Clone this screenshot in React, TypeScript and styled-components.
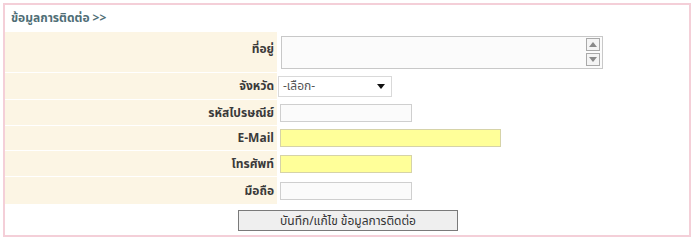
import styled, { createGlobalStyle } from 'styled-components';

const COLORS = {
  border: '#f4cfd8',
  labelBg: '#fcf5e4',
  label: '#3a3a3a',
  title: '#4f6e76',
  inputBorder: '#cfcfcf',
  inputBg: '#fbfbfb',
  required: '#ffff99',
  requiredBorder: '#d6d3a8',
};

const FONT = 'Tahoma, "Noto Sans Thai", "DejaVu Sans", "Noto Sans", sans-serif';

const GlobalStyle = createGlobalStyle`
  html, body {
    margin: 0;
    padding: 0;
    background: #ffffff;
  }
  body {
    font-family: ${FONT};
    font-size: 12px;
  }
`;

const Page = styled.div`
  width: 695px;
  height: 240px;
  padding: 3px 0 0 3px;
  box-sizing: border-box;
`;

/** 外框 */
const Panel = styled.div`
  width: 688px;
  height: 234px;
  box-sizing: border-box;
  border: 2px solid ${COLORS.border};
  display: flex;
  flex-direction: column;
`;

const Title = styled.div`
  height: 26px;
  padding-left: 6px;
  display: flex;
  align-items: center;
  color: ${COLORS.title};
  font-weight: bold;
  font-size: 12px;
`;

const Form = styled.div`
  display: grid;
  grid-template-columns: 272px 1fr;
  grid-template-rows: 40px 26px 25px 24px 25px 27px;
  row-gap: 1px;
  margin-top: 1px;
`;

const Label = styled.div<{ $top?: boolean }>`
  background: ${COLORS.labelBg};
  display: flex;
  justify-content: flex-end;
  align-items: ${(p) => (p.$top ? 'flex-start' : 'center')};
  padding: ${(p) => (p.$top ? '8px 3px 0 0' : '0 3px 0 0')};
  color: ${COLORS.label};
  font-weight: bold;
  font-size: 12px;
`;

const Field = styled.div`
  display: flex;
  align-items: center;
  padding-left: 3px;
`;

const TextArea = styled.div`
  position: relative;
  width: 322px;
  height: 33px;
  margin-left: 1px;
  box-sizing: border-box;
  border: 1px solid #c8c8c8;
  background: ${COLORS.inputBg};
`;

const ScrollBtn = styled.div<{ $down?: boolean }>`
  position: absolute;
  right: 2px;
  top: ${(p) => (p.$down ? '16px' : '1px')};
  width: 14px;
  height: 13px;
  box-sizing: border-box;
  border: 1px solid #a9a9a9;
  background: #f4f4f4;
  display: flex;
  align-items: center;
  justify-content: center;
`;

const Select = styled.div`
  width: 114px;
  height: 21px;
  margin-left: -2px;
  box-sizing: border-box;
  border: 1px solid #d9d9d9;
  background: #ffffff;
  display: flex;
  align-items: center;
  justify-content: space-between;
  padding: 0 6px 0 4px;
  color: #555;
  font-size: 12px;
`;

const Input = styled.div<{ $w: number; $required?: boolean }>`
  width: ${(p) => p.$w}px;
  height: 18px;
  box-sizing: border-box;
  border: 1px solid ${(p) => (p.$required ? COLORS.requiredBorder : COLORS.inputBorder)};
  background: ${(p) => (p.$required ? COLORS.required : COLORS.inputBg)};
`;

const Actions = styled.div`
  flex: 1;
  display: flex;
  justify-content: center;
  padding-top: 6px;
`;

const Button = styled.button`
  width: 220px;
  height: 21px;
  margin-left: 2px;
  box-sizing: border-box;
  border: 1px solid #7a7a7a;
  background: #efefef;
  color: #333;
  font-family: ${FONT};
  font-size: 12px;
  padding: 0;
`;

const Arrow = ({ down }: { down?: boolean }) => (
  <svg width="8" height="5" viewBox="0 0 8 5">
    <path d={down ? 'M0 0H8L4 5Z' : 'M0 5H8L4 0Z'} fill="#8a8a8a" />
  </svg>
);

export default function App() {
  return (
    <>
      <GlobalStyle />
      <Page>
        <Panel>
          <Title>ข้อมูลการติดต่อ &gt;&gt;</Title>
          <Form>
            <Label $top>ที่อยู่</Label>
            <Field>
              <TextArea>
                <ScrollBtn>
                  <Arrow />
                </ScrollBtn>
                <ScrollBtn $down>
                  <Arrow down />
                </ScrollBtn>
              </TextArea>
            </Field>

            <Label>จังหวัด</Label>
            <Field>
              <Select>
                <span>-เลือก-</span>
                <svg width="8" height="5" viewBox="0 0 8 5">
                  <path d="M0 0H8L4 5Z" fill="#111" />
                </svg>
              </Select>
            </Field>

            <Label>รหัสไปรษณีย์</Label>
            <Field>
              <Input $w={132} />
            </Field>

            <Label>E-Mail</Label>
            <Field>
              <Input $w={221} $required />
            </Field>

            <Label>โทรศัพท์</Label>
            <Field>
              <Input $w={132} $required />
            </Field>

            <Label>มือถือ</Label>
            <Field>
              <Input $w={132} />
            </Field>
          </Form>
          <Actions>
            <Button>บันทึก/แก้ไข ข้อมูลการติดต่อ</Button>
          </Actions>
        </Panel>
      </Page>
    </>
  );
}
